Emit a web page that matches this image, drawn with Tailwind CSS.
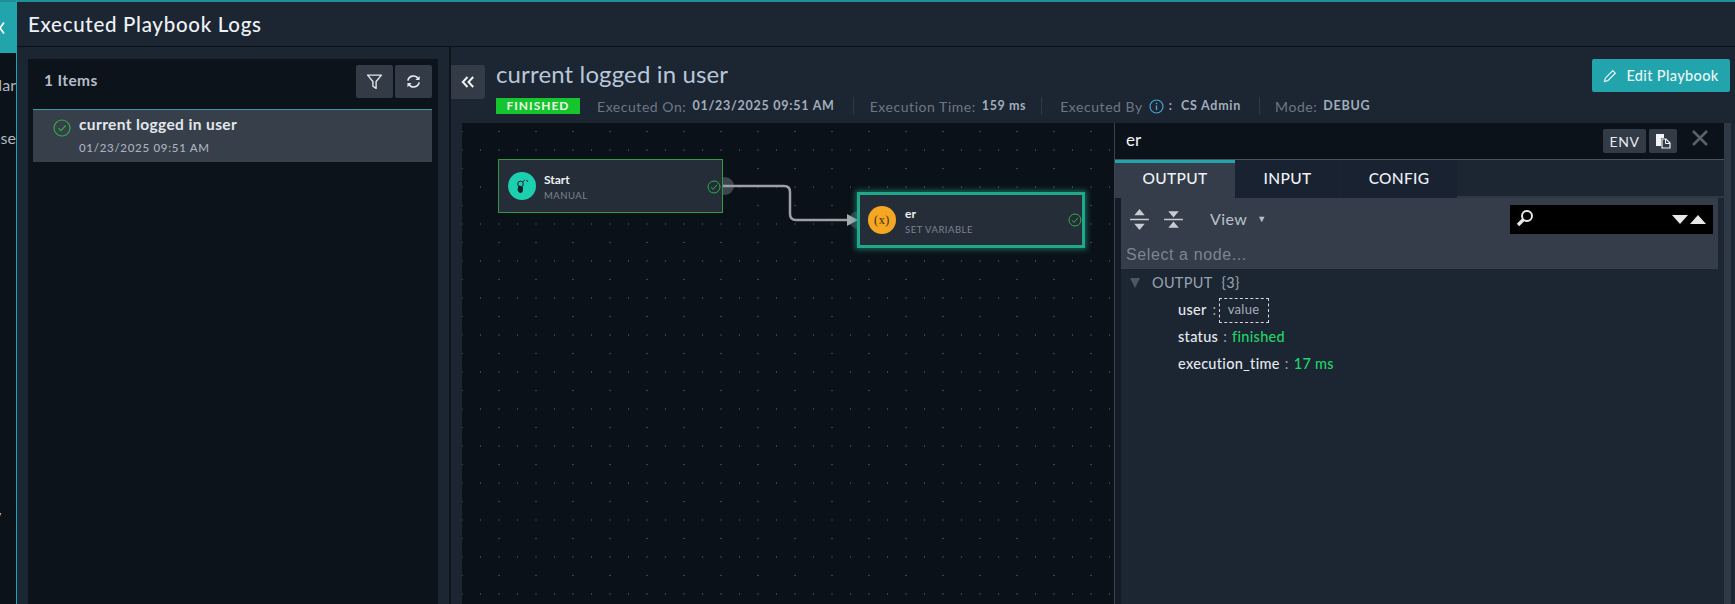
<!DOCTYPE html>
<html>
<head>
<meta charset="utf-8">
<script src="https://cdn.jsdelivr.net/npm/@tailwindcss/browser@4"></script>
</head>
<body class="bg-[#0c1219]">
<div class="flex h-[604px] w-[1735px] overflow-hidden bg-[#0c1219] font-['Lato',sans-serif] text-white">

  <!-- left strip -->
  <div class="flex h-full w-[16px] shrink-0 flex-col overflow-hidden border-t-2 border-[#1f8f98]">
    <div class="flex h-[51px] w-full items-center bg-[#22a4ad]">
      <svg class="shrink-0" width="5" height="12" viewBox="0 0 5 12"><path d="M4 0.500 L0 6 L4 11.500" stroke="#fff" stroke-width="1.800" fill="none"/></svg>
    </div>
    <div class="mt-[22px] flex justify-end whitespace-nowrap text-[16px] leading-5 text-[#aeb7c2]">Mar</div>
    <div class="mt-[33px] flex justify-end whitespace-nowrap text-[16px] leading-5 text-[#aeb7c2]">Case</div>
    <div class="mt-[359px] ml-[-5px] whitespace-nowrap text-[12px] leading-4 text-[#d5dbe2]">y</div>
  </div>

  <!-- main -->
  <div class="flex h-full min-w-0 flex-1 flex-col border-l border-[#22a4ad]">
    <div class="h-[2px] shrink-0 bg-[#1f8f98]"></div>
    <div class="flex h-[44px] shrink-0 items-center bg-[#1c2532] pl-[11px] text-[20.5px] font-medium tracking-[0.7px] text-[#eef1f5]">Executed Playbook Logs</div>
    <div class="h-[1px] shrink-0 bg-[#0a0f15]"></div>

    <div class="flex min-h-0 flex-1">
      <!-- logs list -->
      <div class="w-[432px] shrink-0 bg-[#1c2532] pl-[11px] pr-[11px] pt-[12px]">
        <div class="h-full bg-[#0d131a] pl-[5px] pr-[6px]">
          <div class="flex h-[50px] items-start justify-between pt-[6px]">
            <div class="pl-[11px] pt-[4px] text-[15.5px] font-bold leading-[22px] tracking-[0.4px] text-[#b4bdc9]">1 Items</div>
            <div class="flex gap-[2px]">
              <div class="flex h-[33px] w-[37px] items-center justify-center rounded-[2px] bg-[#333b46]">
                <svg width="17" height="17" viewBox="0 0 16 16" fill="none" stroke="#e4e8ec" stroke-width="1.300"><path d="M1.500 2 H14.500 L9.500 8 V14.500 L6.500 12.500 V8 Z" stroke-linejoin="round"/></svg>
              </div>
              <div class="flex h-[33px] w-[37px] items-center justify-center rounded-[2px] bg-[#333b46]">
                <svg width="15" height="15" viewBox="0 0 16 16" fill="none" stroke="#e4e8ec" stroke-width="1.800"><path d="M2 7 A6 6 0 0 1 13 5"/><path d="M14 9 A6 6 0 0 1 3 11"/><path d="M14.500 2 V6.500 H10" fill="#e4e8ec" stroke="none"/><path d="M1.500 14 V9.500 H6" fill="#e4e8ec" stroke="none"/></svg>
              </div>
            </div>
          </div>
          <div class="flex h-[53px] items-start border-t border-[#3a9aa3] bg-[#373f4a] pl-[20px] pt-[8px]">
            <svg class="mt-[1px] shrink-0" width="18" height="18" viewBox="0 0 18 18" fill="none" stroke="#2fae45" stroke-width="1.200"><circle cx="9" cy="9" r="8"/><path d="M5.500 9.200 L8 11.700 L12.600 6.500"/></svg>
            <div class="ml-[8px]">
              <div class="mt-[-2px] text-[15.5px] font-bold leading-[17px] tracking-[0.38px] text-[#e3e7ec]">current logged in user</div>
              <div class="mt-[8px] text-[11.5px] font-medium leading-[14px] tracking-[0.7px] text-[#aab3bf]">01/23/2025 09:51 AM</div>
            </div>
          </div>
        </div>
      </div>
      <div class="w-[2px] shrink-0 bg-[#0f151c]"></div>

      <!-- detail -->
      <div class="flex min-w-0 flex-1 flex-col bg-[#1c2532]">
        <div class="flex h-[76px] shrink-0">
          <div class="mt-[18px] flex h-[34px] w-[34px] shrink-0 items-center justify-center rounded-r-[3px] bg-[#333b46]">
            <svg width="14" height="14" viewBox="0 0 14 14" fill="none" stroke="#f0f3f5" stroke-width="2"><path d="M6.500 2 L1.800 7 L6.500 12"/><path d="M12.200 2 L7.500 7 L12.200 12"/></svg>
          </div>
          <div class="ml-[11px] min-w-0 flex-1">
            <div class="mt-[12px] text-[24px] leading-[30px] tracking-[0.14px] text-[#b8c7d9]">current logged in user</div>
            <div class="mt-[9px] flex h-[16px] items-center whitespace-nowrap text-[14px] text-[#6d7784]">
              <span class="flex h-[16px] w-[84px] items-center justify-center bg-[#16c42e] text-[12px] font-bold tracking-[1px] text-[#eafbe9]">FINISHED</span>
              <span class="ml-[17px] tracking-[0.55px]">Executed On:</span>
              <span class="ml-[6px] text-[12.5px] font-bold tracking-[0.75px] text-[#a2adba]">01/23/2025 09:51 AM</span>
              <span class="ml-[18px] h-[18px] w-[1px] bg-[#2f3845]"></span>
              <span class="ml-[16px] tracking-[0.55px]">Execution Time:</span>
              <span class="ml-[6px] text-[12.5px] font-bold tracking-[0.6px] text-[#a2adba]">159 ms</span>
              <span class="ml-[15px] h-[18px] w-[1px] bg-[#2f3845]"></span>
              <span class="ml-[18px] tracking-[0.55px]">Executed By</span>
              <svg class="ml-[6px] shrink-0" width="15" height="15" viewBox="0 0 15 15" fill="none"><circle cx="7.500" cy="7.500" r="6.500" stroke="#4aa0d8" stroke-width="1.200"/><path d="M7.500 6.500 V11 M7.500 3.800 V5.200" stroke="#4aa0d8" stroke-width="1.400"/></svg>
              <span class="ml-[5px] text-[12.5px] font-bold text-[#a2adba]">:</span>
              <span class="ml-[9px] text-[12.5px] font-bold tracking-[0.75px] text-[#a2adba]">CS Admin</span>
              <span class="ml-[18px] h-[18px] w-[1px] bg-[#2f3845]"></span>
              <span class="ml-[15px] tracking-[0.55px]">Mode:</span>
              <span class="ml-[6px] text-[12.5px] font-bold tracking-[0.75px] text-[#a2adba]">DEBUG</span>
            </div>
          </div>
          <div class="mr-[5px] mt-[12px] flex h-[33px] w-[138px] shrink-0 items-center justify-center gap-[9px] rounded-[2px] bg-[#22a4ad] text-[14.5px] font-medium tracking-[0.35px] text-[#eaf6f7]">
            <svg width="14" height="14" viewBox="0 0 14 14" fill="none" stroke="#eaf6f7" stroke-width="1.200"><path d="M1.500 12.500 L2.300 9.200 L9.800 1.700 L12.300 4.200 L4.800 11.700 Z"/></svg>
            Edit Playbook
          </div>
        </div>

        <div class="flex min-h-0 flex-1 pl-[11px]">
          <!-- canvas -->
          <div class="relative w-[652px] shrink-0 bg-[#0b1118] bg-[radial-gradient(circle,#667280_0.7px,transparent_1px),radial-gradient(circle,#667280_0.7px,transparent_1px)] bg-size-[37px_18.5px,37px_37px] bg-position-[-18.5px_-0.75px,0_8.5px]">
            <svg class="absolute left-0 top-0" width="652" height="140" viewBox="0 0 652 140" fill="none">
              <circle cx="263" cy="63" r="9" fill="#3c444e"/>
              <circle cx="396" cy="97" r="9" fill="#2c3a44"/>
              <path d="M261 63 H322 Q328 63 328 69 V91 Q328 97 334 97 H388" stroke="#9ca1a7" stroke-width="2.500"/>
              <path d="M385 91 L396 97 L385 103 Z" fill="#a4a9ae"/>
            </svg>

            <div class="absolute left-[36px] top-[36px] flex h-[54px] w-[225px] items-center border border-[#2f9a42] bg-[#252d39] pl-[9px]">
              <div class="flex h-[28px] w-[28px] shrink-0 items-center justify-center rounded-full bg-[#1ccfae]">
                <svg width="16" height="16" viewBox="0 0 16 16" fill="none" stroke="#16202a" stroke-width="1"><circle cx="6.500" cy="6" r="2.800"/><path d="M8.800 3.800 L11 1.800 M12.500 2 L14 4"/><path d="M5 8 L8.500 9 L8.500 12.500 Q8 15 6 14.500 Q4 14 4 11 Z" fill="#16202a"/></svg>
              </div>
              <div class="ml-[8px] pt-[2px]">
                <div class="text-[12px] font-bold leading-[14px] text-[#eef1f4]">Start</div>
                <div class="mt-[3px] text-[9.5px] leading-[12px] tracking-[0.5px] text-[#7b8490]">MANUAL</div>
              </div>
              <svg class="absolute right-[1px] top-[20px]" width="14" height="14" viewBox="0 0 14 14" fill="none" stroke="#2fae45" stroke-width="1"><circle cx="7" cy="7" r="6"/><path d="M4 7.200 L6 9.400 L10 4.800"/></svg>
            </div>

            <div class="absolute left-[395px] top-[69px] flex h-[56px] w-[228px] items-center border-[3px] border-[#1fa88c] bg-[#252d39] pl-[8px] shadow-[0_0_5px_2px_rgba(31,168,140,0.5)]">
              <div class="flex h-[28px] w-[28px] shrink-0 items-center justify-center rounded-full bg-[#f5a623] font-['Liberation_Serif',serif] text-[12px] leading-none tracking-[0.6px] text-[#3a2c12]">(x)</div>
              <div class="ml-[9px] pt-[2px]">
                <div class="text-[12px] font-bold leading-[14px] text-[#eef1f4]">er</div>
                <div class="mt-[3px] text-[9.5px] leading-[12px] tracking-[0.5px] text-[#7b8490]">SET VARIABLE</div>
              </div>
              <svg class="absolute right-[0px] top-[18px]" width="14" height="14" viewBox="0 0 14 14" fill="none" stroke="#2fae45" stroke-width="1"><circle cx="7" cy="7" r="6"/><path d="M4 7.200 L6 9.400 L10 4.800"/></svg>
            </div>
          </div>

          <!-- side panel -->
          <div class="flex min-w-0 flex-1 flex-col border-l border-[#3a4350]">
            <div class="flex h-[37px] shrink-0 items-center border-b border-[#4a525d] bg-[#0c1219] pl-[11px] pr-[16px]">
              <span class="mb-[4px] flex-1 text-[17px] leading-none text-[#f3f5f7]">er</span>
              <span class="flex h-[24px] w-[43px] items-center justify-center rounded-[2px] bg-[#333b46] text-[14px] tracking-[0.5px] text-[#e6eaee]">ENV</span>
              <span class="ml-[3px] flex h-[24px] w-[28px] items-center justify-center rounded-[2px] bg-[#333b46]">
                <svg width="16" height="16" viewBox="0 0 16 16"><path d="M1 1 H9 V5 H6 V13 H1 Z" fill="#f2f4f6"/><path d="M7 6 H11 L15 10 V15 H7 Z" fill="none" stroke="#f2f4f6" stroke-width="1.200"/><path d="M10.500 6 V10.500 H15" fill="none" stroke="#f2f4f6" stroke-width="1"/></svg>
              </span>
              <svg class="mb-[6px] ml-[15px]" width="16" height="16" viewBox="0 0 16 16" stroke="#59616b" stroke-width="2.600" fill="none"><path d="M1 1 L15 15 M15 1 L1 15"/></svg>
            </div>
            <div class="flex min-h-0 flex-1">
              <div class="flex min-w-0 flex-1 flex-col">
                <div class="flex h-[38px] shrink-0 text-[15.5px] font-medium tracking-[0.3px] text-[#eef1f4]">
                  <div class="flex w-[120px] items-center justify-center border-t-[3px] border-[#22a4ad] bg-[#343d49] pb-[3px]">OUTPUT</div>
                  <div class="flex w-[106px] items-center justify-center border-r border-[#1c2532] bg-[#192230]">INPUT</div>
                  <div class="flex w-[116px] items-center justify-center bg-[#192230]">CONFIG</div>
                  <div class="flex-1 border-b-2 border-[#2f3845]"></div>
                </div>
                <div class="flex min-h-0 flex-1 pr-[6px]">
                  <div class="w-[6px] shrink-0 bg-[#141c26]"></div>
                  <div class="min-w-0 flex-1">
                    <div class="flex h-[71px] flex-col bg-[#343d49]">
                      <div class="flex h-[42px] shrink-0 items-center pl-[9px] pr-[5px]">
                        <svg width="19" height="23" viewBox="0 0 18 22" fill="#c7ccd2"><path d="M9 1 L14 7 H4 Z M0 10.200 H18 V11.600 H0 Z M9 21 L14 15 H4 Z"/></svg>
                        <svg class="ml-[15px]" width="19" height="23" viewBox="0 0 18 22" fill="#c7ccd2"><path d="M9 9 L14 3 H4 Z M0 10.200 H18 V11.600 H0 Z M9 13 L14 19 H4 Z"/></svg>
                        <span class="ml-[27px] text-[16px] tracking-[0.4px] text-[#b9c2cc]">View</span>
                        <span class="ml-[10px] text-[9px] text-[#b9c2cc]">▼</span>
                        <div class="ml-auto flex h-[29px] w-[203px] items-center bg-black pl-[6px] pr-[7px]">
                          <svg width="18" height="20" viewBox="0 0 18 20" fill="none" stroke="#e8e8e8"><circle cx="11" cy="7" r="5" stroke-width="2"/><path d="M7.500 10.500 L2 16" stroke-width="3.400"/></svg>
                          <svg class="ml-auto" width="16" height="9" viewBox="0 0 16 9" fill="#e8e8e8"><path d="M0 0 H16 L8 9 Z"/></svg>
                          <svg class="ml-[2px]" width="16" height="9" viewBox="0 0 16 9" fill="#e8e8e8"><path d="M0 9 H16 L8 0 Z"/></svg>
                        </div>
                      </div>
                      <div class="mt-[4px] pl-[5px] font-['Liberation_Sans',sans-serif] text-[16px] leading-[22px] tracking-[0.6px] text-[#7c8590]">Select a node...</div>
                    </div>
                    <div class="pt-[4px]">
                      <div class="flex h-[20px] items-center pl-[8px] text-[14.5px] tracking-[0.3px] text-[#99a3ae]">
                        <svg width="12" height="10" viewBox="0 0 12 10" fill="#4e5661"><path d="M1 0 H11 L6 10 Z"/></svg>
                        <span class="ml-[11px]">OUTPUT</span><span class="ml-[9px]">{3}</span>
                      </div>
                      <div class="mt-[4px] flex h-[26px] items-center pl-[57px] text-[14.5px] tracking-[0.3px]">
                        <span class="font-medium text-[#e6eaee]">user</span><span class="ml-[6px] text-[#99a3ae]">:</span>
                        <span class="ml-[2px] flex h-[25px] w-[50px] items-center justify-center border border-dashed border-[#d5d9de] text-[13px] text-[#a6aeb8]">value</span>
                      </div>
                      <div class="mt-[1px] flex h-[26px] items-center pl-[57px] text-[14.5px] tracking-[0.3px]">
                        <span class="font-medium text-[#e6eaee]">status</span><span class="ml-[5px] text-[#99a3ae]">:</span><span class="ml-[5px] font-medium text-[#1fd46a]">finished</span>
                      </div>
                      <div class="mt-[1px] flex h-[26px] items-center pl-[57px] text-[14.5px] tracking-[0.3px]">
                        <span class="font-medium text-[#e6eaee]">execution_time</span><span class="ml-[5px] text-[#99a3ae]">:</span><span class="ml-[5px] font-medium text-[#1fd46a]">17 ms</span>
                      </div>
                    </div>
                  </div>
                </div>
              </div>
            </div>
          </div>
          <div class="flex w-[11px] shrink-0">
            <div class="h-full w-[7px] bg-[#2f3845]"></div>
          </div>
        </div>
      </div>
    </div>
  </div>
</div>
</body>
</html>
